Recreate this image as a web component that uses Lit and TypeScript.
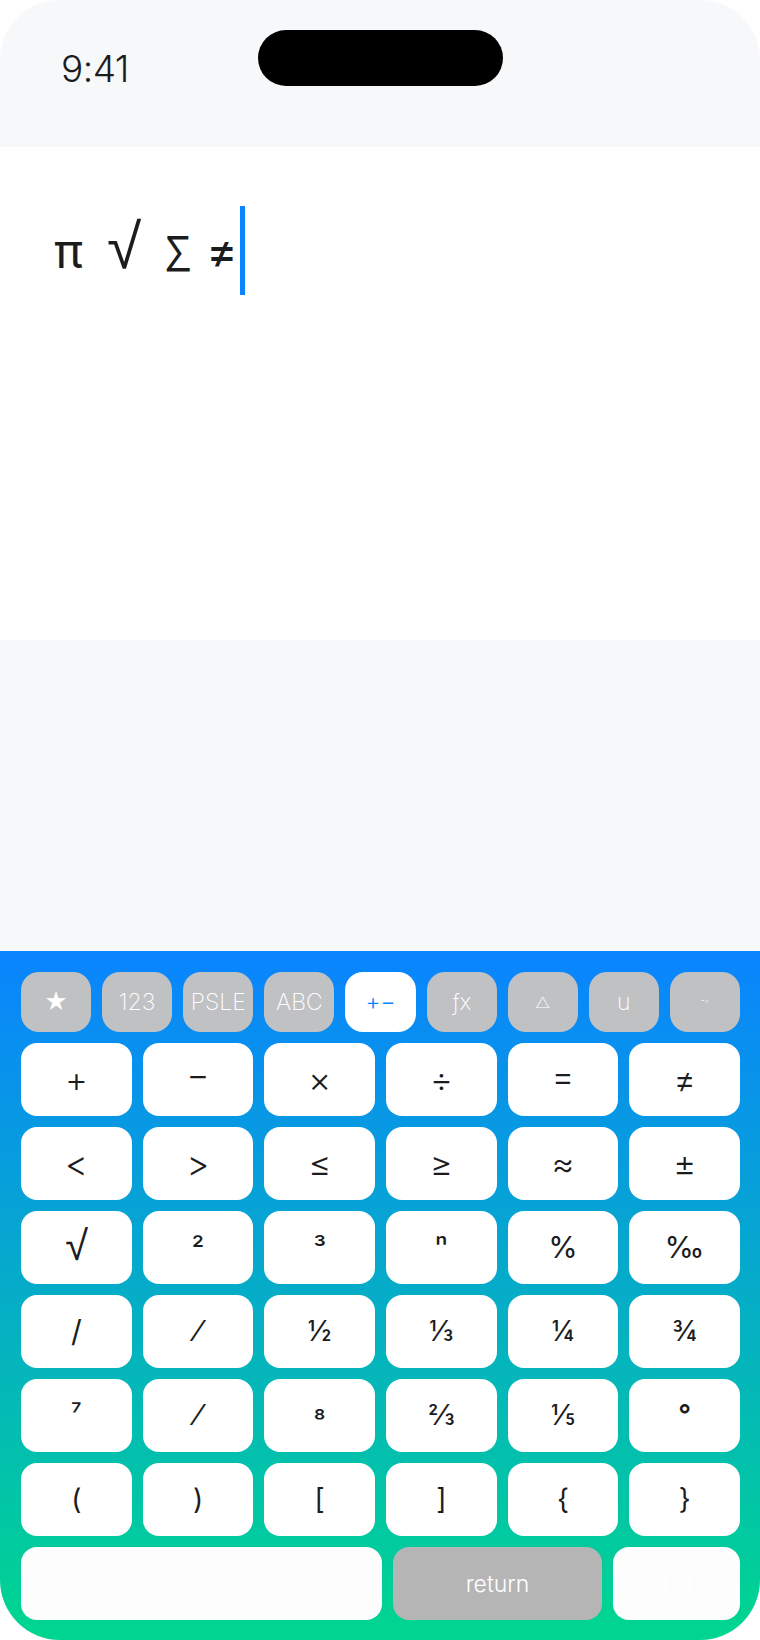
import { LitElement, html, css } from "lit";
import { customElement } from "lit/decorators.js";

const TABS: [string, string][] = [
  ["★", ""], ["123", ""], ["PSLE", ""], ["ABC", ""], ["+−", "on"],
  ["ƒx", ""], ["△", "tri"], ["u", ""], ["⁻ᐟ", "tiny"],
];
const KEYS: [string, string][] = [
  ["+", "m"], ["−", "m up4"], ["×", "m"], ["÷", "m"], ["=", "m up3"], ["≠", "m"],
  ["<", "m"], [">", "m"], ["≤", "m"], ["≥", "m"], ["≈", "m"], ["±", "m"],
  ["√", "root"], ["²", "dn2"], ["³", "dn2"], ["ⁿ", ""], ["%", "p"], ["‰", "p"],
  ["/", "p"], ["⁄", ""], ["½", ""], ["⅓", ""], ["¼", ""], ["¾", ""],
  ["⁷", "small"], ["⁄", ""], ["⁸", "small dn6"], ["⅔", ""], ["⅕", ""], ["°", "deg"],
  ["(", ""], [")", ""], ["[", ""], ["]", ""], ["{", ""], ["}", ""],
];

@customElement("app-root")
export class AppRoot extends LitElement {
  static styles = css`
    :host { display: block; width: 760px; height: 1640px; background: #fff; font-family: Inter, "Noto Sans", sans-serif; }
    .phone { height: 1640px; border-radius: 60px; overflow: hidden; display: flex; flex-direction: column; background: #f7f8fa; }
    .status { height: 147px; flex: none; position: relative; box-sizing: border-box; padding: 47px 0 0 61px; }
    .time { font-size: 37px; line-height: 44px; font-weight: 300; letter-spacing: -0.5px; color: #1c1c1e; }
    .island { position: absolute; left: 258px; top: 30px; width: 245px; height: 56px; border-radius: 28px; background: #000; }
    .editor { height: 493px; flex: none; background: #fff; box-sizing: border-box; padding: 59px 0 0 54px; display: flex; align-items: flex-start; }
    .formula { display: flex; font-size: 48px; line-height: 89px; height: 89px; color: #1c1c1e; }
    .pi { width: 53px; }
    .rt { width: 52px; font-family: "Liberation Sans", sans-serif; transform: scale(1.3, 1.3); transform-origin: 0 58px; }
    .sum { width: 47px; font-family: "Noto Sans CJK SC", sans-serif; transform: scaleX(0.8); transform-origin: 0 50%; }
    .ne { width: 34px; }
    .caret { width: 5px; height: 89px; background: #0a84ff; flex: none; }
    .gap { height: 311px; flex: none; }
    .kb { flex: 1; box-sizing: border-box; padding: 21px 20px 20px 21px; display: flex; flex-direction: column; gap: 11px;
      background: linear-gradient(180deg, #0a84ff 0%, #00d68f 100%); }
    .tabs { display: grid; grid-template-columns: repeat(9, 1fr); gap: 11px; height: 60px; }
    .tab { border-radius: 18px; background: #c0c1c3; color: #fff; font-size: 23px; font-weight: 200; display: flex; align-items: center; justify-content: center; }
    .tab.on { background: #fff; color: #0a84ff; font-weight: 300; }
    .tab.tri { font-size: 15px; }
    .tab.tiny { font-size: 9px; font-weight: 400; }
    .grid { display: grid; grid-template-columns: repeat(6, 1fr); grid-auto-rows: 73px; gap: 11px; }
    .key { border-radius: 16px; background: #fff; color: #1c1c1e; font-size: 28px; display: flex; align-items: center; justify-content: center; padding-bottom: 2px; box-sizing: border-box; }
    .key.m { font-size: 35px; font-weight: 300; }
    .key.p { font-size: 30px; font-weight: 400; }
    .key.root { font-family: "Liberation Sans", sans-serif; font-size: 32px; }
    .root span { display: block; transform: scale(1.3, 1.3); }
    .key.small { font-size: 26px; }
    .key.deg { font-size: 28px; font-weight: 600; }
    .up4 span { display: block; transform: translateY(-5px); }
    .up3 span { display: block; transform: translateY(-3px); }
    .dn2 span { display: block; transform: translateY(2px); }
    .dn6 span { display: block; transform: translateY(7px); }
    .bottom { display: grid; grid-template-columns: 361fr 209fr 127fr; gap: 11px; height: 73px; }
    .wide { border-radius: 16px; background: #fdfdfd; color: #fff; font-size: 23px; font-weight: 300; display: flex; align-items: center; justify-content: center; }
    .ret { background: #b5b5b5; }
    .bs { width: 30px; height: 26px; margin-right: 2px; fill: none; stroke: #fff; stroke-width: 2.5; stroke-linejoin: round; stroke-linecap: round; }
  `;
  render() {
    return html`<div class="phone">
      <div class="status"><span class="time">9:41</span><div class="island"></div></div>
      <div class="editor">
        <div class="formula"><span class="pi">π</span><span class="rt">√</span><span class="sum">∑</span><span class="ne">≠</span></div>
        <div class="caret"></div>
      </div>
      <div class="gap"></div>
      <div class="kb">
        <div class="tabs">${TABS.map(([t, c]) => html`<div class="tab ${c}">${t}</div>`)}</div>
        <div class="grid">${KEYS.map(([k, c]) => html`<div class="key ${c}"><span>${k}</span></div>`)}</div>
        <div class="bottom">
          <div class="wide">space</div>
          <div class="wide ret">return</div>
          <div class="wide"><svg class="bs" viewBox="0 0 30 26"><path d="M9 2h17a2.500 2.500 0 0 1 2.500 2.500v17a2.500 2.500 0 0 1-2.500 2.500H9L1.500 13z"/><path d="M13 8l10 10M23 8L13 18"/></svg></div>
        </div>
      </div>
    </div>`;
  }
}
